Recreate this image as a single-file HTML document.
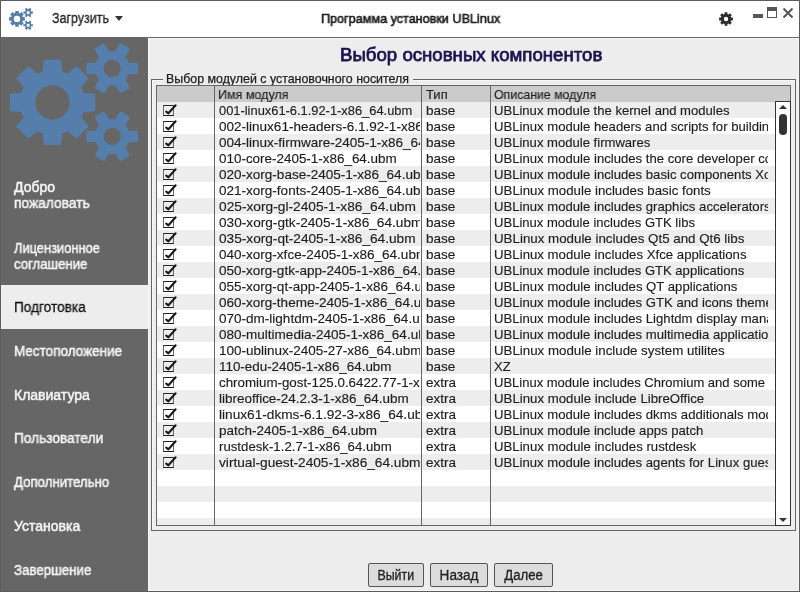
<!DOCTYPE html>
<html><head><meta charset="utf-8"><style>
html,body{margin:0;padding:0;}
body{width:800px;height:592px;position:relative;overflow:hidden;background:#5c5c5c;font-family:"Liberation Sans",sans-serif;-webkit-font-smoothing:antialiased;}
.abs{position:absolute;}
.t{position:absolute;white-space:nowrap;line-height:1;will-change:transform;}
.cell{position:absolute;white-space:nowrap;overflow:hidden;font-size:13px;line-height:17px;height:16px;color:#1e1e1e;will-change:transform;-webkit-text-stroke:0.15px #1e1e1e;}
.chk{position:absolute;width:9px;height:9px;border:1px solid #222;border-left-color:#666;border-right-color:#666;}
.btn{position:absolute;will-change:transform;border:1px solid #555;border-radius:2px;background:#dcdcdc;font-size:14px;line-height:22px;text-align:center;color:#222;}
#tb{position:absolute;left:1px;top:1px;width:798px;height:36px;background:#fff;}
#sb{position:absolute;left:1px;top:38px;width:147px;height:553px;background:#666;}
#ct{position:absolute;left:148px;top:38px;width:649px;height:551px;background:#ededed;border:1px solid #f9f9f9;}
</style></head><body>
<div id="tb"></div><div class="abs" style="left:1px;top:37px;width:798px;height:1px;background:#666"></div>
<div id="sb"></div><div id="ct"></div>
<svg class="abs" style="left:0;top:0" width="800" height="40"><path fill="#567eac" fill-rule="evenodd" d="M18.83,13.10L18.66,10.96L15.34,10.96L15.17,13.10A6.08,6.08 0 0 0 14.19,13.51L12.56,12.11L10.21,14.46L11.61,16.09A6.08,6.08 0 0 0 11.20,17.07L9.06,17.24L9.06,20.56L11.20,20.73A6.08,6.08 0 0 0 11.61,21.71L10.21,23.34L12.56,25.69L14.19,24.29A6.08,6.08 0 0 0 15.17,24.70L15.34,26.84L18.66,26.84L18.83,24.70A6.08,6.08 0 0 0 19.81,24.29L21.44,25.69L23.79,23.34L22.39,21.71A6.08,6.08 0 0 0 22.80,20.73L24.94,20.56L24.94,17.24L22.80,17.07A6.08,6.08 0 0 0 22.39,16.09L23.79,14.46L21.44,12.11L19.81,13.51A6.08,6.08 0 0 0 18.83,13.10ZM13.80,18.90a3.20,3.20 0 1 0 6.40,0a3.20,3.20 0 1 0 -6.40,0ZM31.22,13.65L32.95,13.61L32.95,11.47L31.22,11.43A3.25,3.25 0 0 0 30.66,10.45L31.48,8.94L29.63,7.87L28.73,9.34A3.25,3.25 0 0 0 27.60,9.34L26.70,7.87L24.85,8.94L25.67,10.45A3.25,3.25 0 0 0 25.11,11.43L23.38,11.47L23.38,13.61L25.11,13.65A3.25,3.25 0 0 0 25.67,14.63L24.85,16.15L26.70,17.22L27.60,15.75A3.25,3.25 0 0 0 28.73,15.75L29.63,17.22L31.48,16.15L30.66,14.63A3.25,3.25 0 0 0 31.22,13.65ZM26.56,12.54a1.61,1.61 0 1 0 3.22,0a1.61,1.61 0 1 0 -3.22,0ZM31.22,26.37L32.95,26.33L32.95,24.19L31.22,24.15A3.25,3.25 0 0 0 30.66,23.17L31.48,21.65L29.63,20.58L28.73,22.05A3.25,3.25 0 0 0 27.60,22.05L26.70,20.58L24.85,21.65L25.67,23.17A3.25,3.25 0 0 0 25.11,24.15L23.38,24.19L23.38,26.33L25.11,26.37A3.25,3.25 0 0 0 25.67,27.35L24.85,28.86L26.70,29.93L27.60,28.46A3.25,3.25 0 0 0 28.73,28.46L29.63,29.93L31.48,28.86L30.66,27.35A3.25,3.25 0 0 0 31.22,26.37ZM26.56,25.26a1.61,1.61 0 1 0 3.22,0a1.61,1.61 0 1 0 -3.22,0Z"/><path fill="#2b2b2b" fill-rule="evenodd" d="M727.39,13.99L727.40,12.14L724.60,12.14L724.61,13.99A5.20,5.20 0 0 0 723.44,14.47L722.14,13.16L720.16,15.14L721.47,16.44A5.20,5.20 0 0 0 720.99,17.61L719.14,17.60L719.14,20.40L720.99,20.39A5.20,5.20 0 0 0 721.47,21.56L720.16,22.86L722.14,24.84L723.44,23.53A5.20,5.20 0 0 0 724.61,24.01L724.60,25.86L727.40,25.86L727.39,24.01A5.20,5.20 0 0 0 728.56,23.53L729.86,24.84L731.84,22.86L730.53,21.56A5.20,5.20 0 0 0 731.01,20.39L732.86,20.40L732.86,17.60L731.01,17.61A5.20,5.20 0 0 0 730.53,16.44L731.84,15.14L729.86,13.16L728.56,14.47A5.20,5.20 0 0 0 727.39,13.99ZM723.80,19.00a2.20,2.20 0 1 0 4.40,0a2.20,2.20 0 1 0 -4.40,0Z"/></svg>
<div class="t" style="left:51.5px;top:11.15px;font-size:14px;color:#222;-webkit-text-stroke:0.3px #222;transform:scaleX(0.89);transform-origin:0 0;">Загрузить</div>
<div class="abs" style="left:115px;top:16px;width:0;height:0;border-left:4.5px solid transparent;border-right:4.5px solid transparent;border-top:5px solid #333"></div>
<div class="t" style="left:321px;top:12.00px;font-size:13px;color:#222;-webkit-text-stroke:0.6px #1a1a1a;transform:scaleX(0.97);transform-origin:0 0;">Программа установки UBLinux</div>
<div class="abs" style="left:753px;top:14px;width:10px;height:4px;background:#555"></div>
<div class="abs" style="left:767px;top:7px;width:8px;height:6px;border:1px solid #555;border-top-width:4px;"></div>
<svg class="abs" style="left:780px;top:5px" width="16" height="16"><path d="M3.5,3.5L12.5,12.5M12.5,3.5L3.5,12.5" stroke="#555" stroke-width="2"/></svg>
<svg class="abs" style="left:0;top:0" width="148" height="180"><path fill="#567eac" stroke="#567eac" stroke-width="2.5" stroke-linejoin="round" fill-rule="evenodd" d="M61.02,72.33L60.13,60.95L44.87,60.95L43.98,72.33A31.25,31.25 0 0 0 37.27,75.11L28.58,67.70L17.80,78.48L25.21,87.17A31.25,31.25 0 0 0 22.43,93.88L11.05,94.77L11.05,110.03L22.43,110.92A31.25,31.25 0 0 0 25.21,117.63L17.80,126.32L28.58,137.10L37.27,129.69A31.25,31.25 0 0 0 43.98,132.47L44.87,143.85L60.13,143.85L61.02,132.47A31.25,31.25 0 0 0 67.73,129.69L76.42,137.10L87.20,126.32L79.79,117.63A31.25,31.25 0 0 0 82.57,110.92L93.95,110.03L93.95,94.77L82.57,93.88A31.25,31.25 0 0 0 79.79,87.17L87.20,78.48L76.42,67.70L67.73,75.11A31.25,31.25 0 0 0 61.02,72.33ZM34.15,102.40a18.35,18.35 0 1 0 36.70,0a18.35,18.35 0 1 0 -36.70,0ZM127.65,73.10L136.75,72.87L136.75,63.93L127.65,63.70A16.15,16.15 0 0 0 124.00,57.37L128.34,49.37L120.61,44.91L115.85,52.67A16.15,16.15 0 0 0 108.55,52.67L103.79,44.91L96.06,49.37L100.40,57.37A16.15,16.15 0 0 0 96.75,63.70L87.65,63.93L87.65,72.87L96.75,73.10A16.15,16.15 0 0 0 100.40,79.43L96.06,87.43L103.79,91.89L108.55,84.13A16.15,16.15 0 0 0 115.85,84.13L120.61,91.89L128.34,87.43L124.00,79.43A16.15,16.15 0 0 0 127.65,73.10ZM102.35,68.40a9.85,9.85 0 1 0 19.70,0a9.85,9.85 0 1 0 -19.70,0ZM127.65,141.10L136.75,140.87L136.75,131.93L127.65,131.70A16.15,16.15 0 0 0 124.00,125.37L128.34,117.37L120.61,112.91L115.85,120.67A16.15,16.15 0 0 0 108.55,120.67L103.79,112.91L96.06,117.37L100.40,125.37A16.15,16.15 0 0 0 96.75,131.70L87.65,131.93L87.65,140.87L96.75,141.10A16.15,16.15 0 0 0 100.40,147.43L96.06,155.43L103.79,159.89L108.55,152.13A16.15,16.15 0 0 0 115.85,152.13L120.61,159.89L128.34,155.43L124.00,147.43A16.15,16.15 0 0 0 127.65,141.10ZM102.35,136.40a9.85,9.85 0 1 0 19.70,0a9.85,9.85 0 1 0 -19.70,0Z"/></svg>
<div class="abs" style="left:1px;top:285px;width:147px;height:44px;background:#ededed"></div>
<div class="t" style="left:14px;top:180.15px;font-size:14px;color:#f4f4f4;-webkit-text-stroke:0.5px #f4f4f4;transform:scaleX(1.0);transform-origin:0 0;">Добро</div>
<div class="t" style="left:14px;top:196.15px;font-size:14px;color:#f4f4f4;-webkit-text-stroke:0.5px #f4f4f4;transform:scaleX(0.983);transform-origin:0 0;">пожаловать</div>
<div class="t" style="left:14px;top:241.15px;font-size:14px;color:#f4f4f4;-webkit-text-stroke:0.5px #f4f4f4;transform:scaleX(0.918);transform-origin:0 0;">Лицензионное</div>
<div class="t" style="left:14px;top:256.65px;font-size:14px;color:#f4f4f4;-webkit-text-stroke:0.5px #f4f4f4;transform:scaleX(0.939);transform-origin:0 0;">соглашение</div>
<div class="t" style="left:14px;top:300.15px;font-size:14px;color:#111;-webkit-text-stroke:0.3px #111;transform:scaleX(0.973);transform-origin:0 0;">Подготовка</div>
<div class="t" style="left:14px;top:344.15px;font-size:14px;color:#f4f4f4;-webkit-text-stroke:0.5px #f4f4f4;transform:scaleX(0.964);transform-origin:0 0;">Местоположение</div>
<div class="t" style="left:14px;top:388.15px;font-size:14px;color:#f4f4f4;-webkit-text-stroke:0.5px #f4f4f4;transform:scaleX(1.0);transform-origin:0 0;">Клавиатура</div>
<div class="t" style="left:14px;top:431.15px;font-size:14px;color:#f4f4f4;-webkit-text-stroke:0.5px #f4f4f4;transform:scaleX(0.977);transform-origin:0 0;">Пользователи</div>
<div class="t" style="left:14px;top:475.35px;font-size:14px;color:#f4f4f4;-webkit-text-stroke:0.5px #f4f4f4;transform:scaleX(0.944);transform-origin:0 0;">Дополнительно</div>
<div class="t" style="left:14px;top:518.95px;font-size:14px;color:#f4f4f4;-webkit-text-stroke:0.5px #f4f4f4;transform:scaleX(1.0);transform-origin:0 0;">Установка</div>
<div class="t" style="left:14px;top:562.75px;font-size:14px;color:#f4f4f4;-webkit-text-stroke:0.5px #f4f4f4;transform:scaleX(0.95);transform-origin:0 0;">Завершение</div>
<div class="t" style="left:339.5px;top:46.06px;font-size:18px;color:#1c1450;-webkit-text-stroke:0.75px #1c1450;transform:scaleX(1.035);transform-origin:0 0;">Выбор основных компонентов</div>
<div class="abs" style="left:151px;top:79px;width:643px;height:450px;border:1px solid #666;box-shadow:inset 1px 1px 0 #f7f7f7"></div>
<div class="abs" style="left:163px;top:72px;width:250px;height:12px;background:#ededed"></div>
<div class="t" style="left:166px;top:72.80px;font-size:12.4px;color:#1e1e1e;-webkit-text-stroke:0.25px #1e1e1e;">Выбор модулей с установочного носителя</div>
<div class="abs" style="left:156px;top:85px;width:633px;height:439px;border:1px solid #666;background:#fff;overflow:hidden">
<div class="abs" style="left:0;top:0;width:640px;height:16px;background:#cbcbcb"></div>
<div class="cell" style="left:61px;top:0;transform:scaleX(0.963);transform-origin:0 0;">Имя модуля</div>
<div class="cell" style="left:268.5px;top:0;transform:scaleX(1.0);transform-origin:0 0;">Тип</div>
<div class="cell" style="left:336.5px;top:0;transform:scaleX(0.948);transform-origin:0 0;">Описание модуля</div>
<div class="abs" style="left:0;top:16px;width:640px;height:16px;background:#ededed"></div>
<div class="chk" style="left:6px;top:19px"></div>
<svg class="abs" style="left:6px;top:16px" width="16" height="16"><path d="M3.2,9.6L5.4,11.3L12.6,3.3" stroke="#1a1a1a" stroke-width="2.1" stroke-linecap="round" stroke-linejoin="round" fill="none"/></svg>
<div class="cell" style="left:62px;top:16px;width:201px"><span style="display:inline-block;transform:scaleX(0.99);transform-origin:0 0">001-linux61-6.1.92-1-x86_64.ubm</span></div>
<div class="cell" style="left:268.5px;top:16px;width:64px"><span style="display:inline-block;transform:scaleX(1.04);transform-origin:0 0">base</span></div>
<div class="cell" style="left:336.5px;top:16px;width:273.5px"><span style="display:inline-block;transform:scaleX(1.006);transform-origin:0 0">UBLinux module the kernel and modules</span></div>
<div class="abs" style="left:0;top:32px;width:640px;height:16px;background:#ffffff"></div>
<div class="chk" style="left:6px;top:35px"></div>
<svg class="abs" style="left:6px;top:32px" width="16" height="16"><path d="M3.2,9.6L5.4,11.3L12.6,3.3" stroke="#1a1a1a" stroke-width="2.1" stroke-linecap="round" stroke-linejoin="round" fill="none"/></svg>
<div class="cell" style="left:62px;top:32px;width:201px"><span style="display:inline-block;transform:scaleX(1.04);transform-origin:0 0">002-linux61-headers-6.1.92-1-x86_64.ubm</span></div>
<div class="cell" style="left:268.5px;top:32px;width:64px"><span style="display:inline-block;transform:scaleX(1.04);transform-origin:0 0">base</span></div>
<div class="cell" style="left:336.5px;top:32px;width:273.5px"><span style="display:inline-block;transform:scaleX(1.01);transform-origin:0 0">UBLinux module headers and scripts for building modules</span></div>
<div class="abs" style="left:0;top:48px;width:640px;height:16px;background:#ededed"></div>
<div class="chk" style="left:6px;top:51px"></div>
<svg class="abs" style="left:6px;top:48px" width="16" height="16"><path d="M3.2,9.6L5.4,11.3L12.6,3.3" stroke="#1a1a1a" stroke-width="2.1" stroke-linecap="round" stroke-linejoin="round" fill="none"/></svg>
<div class="cell" style="left:62px;top:48px;width:201px"><span style="display:inline-block;transform:scaleX(1.04);transform-origin:0 0">004-linux-firmware-2405-1-x86_64.ubm</span></div>
<div class="cell" style="left:268.5px;top:48px;width:64px"><span style="display:inline-block;transform:scaleX(1.04);transform-origin:0 0">base</span></div>
<div class="cell" style="left:336.5px;top:48px;width:273.5px"><span style="display:inline-block;transform:scaleX(1.006);transform-origin:0 0">UBLinux module firmwares</span></div>
<div class="abs" style="left:0;top:64px;width:640px;height:16px;background:#ffffff"></div>
<div class="chk" style="left:6px;top:67px"></div>
<svg class="abs" style="left:6px;top:64px" width="16" height="16"><path d="M3.2,9.6L5.4,11.3L12.6,3.3" stroke="#1a1a1a" stroke-width="2.1" stroke-linecap="round" stroke-linejoin="round" fill="none"/></svg>
<div class="cell" style="left:62px;top:64px;width:201px"><span style="display:inline-block;transform:scaleX(1.033);transform-origin:0 0">010-core-2405-1-x86_64.ubm</span></div>
<div class="cell" style="left:268.5px;top:64px;width:64px"><span style="display:inline-block;transform:scaleX(1.04);transform-origin:0 0">base</span></div>
<div class="cell" style="left:336.5px;top:64px;width:273.5px"><span style="display:inline-block;transform:scaleX(1.01);transform-origin:0 0">UBLinux module includes the core developer components</span></div>
<div class="abs" style="left:0;top:80px;width:640px;height:16px;background:#ededed"></div>
<div class="chk" style="left:6px;top:83px"></div>
<svg class="abs" style="left:6px;top:80px" width="16" height="16"><path d="M3.2,9.6L5.4,11.3L12.6,3.3" stroke="#1a1a1a" stroke-width="2.1" stroke-linecap="round" stroke-linejoin="round" fill="none"/></svg>
<div class="cell" style="left:62px;top:80px;width:201px"><span style="display:inline-block;transform:scaleX(1.04);transform-origin:0 0">020-xorg-base-2405-1-x86_64.ubm</span></div>
<div class="cell" style="left:268.5px;top:80px;width:64px"><span style="display:inline-block;transform:scaleX(1.04);transform-origin:0 0">base</span></div>
<div class="cell" style="left:336.5px;top:80px;width:273.5px"><span style="display:inline-block;transform:scaleX(1.01);transform-origin:0 0">UBLinux module includes basic components Xorg</span></div>
<div class="abs" style="left:0;top:96px;width:640px;height:16px;background:#ffffff"></div>
<div class="chk" style="left:6px;top:99px"></div>
<svg class="abs" style="left:6px;top:96px" width="16" height="16"><path d="M3.2,9.6L5.4,11.3L12.6,3.3" stroke="#1a1a1a" stroke-width="2.1" stroke-linecap="round" stroke-linejoin="round" fill="none"/></svg>
<div class="cell" style="left:62px;top:96px;width:201px"><span style="display:inline-block;transform:scaleX(1.04);transform-origin:0 0">021-xorg-fonts-2405-1-x86_64.ubm</span></div>
<div class="cell" style="left:268.5px;top:96px;width:64px"><span style="display:inline-block;transform:scaleX(1.04);transform-origin:0 0">base</span></div>
<div class="cell" style="left:336.5px;top:96px;width:273.5px"><span style="display:inline-block;transform:scaleX(1.02);transform-origin:0 0">UBLinux module includes basic fonts</span></div>
<div class="abs" style="left:0;top:112px;width:640px;height:16px;background:#ededed"></div>
<div class="chk" style="left:6px;top:115px"></div>
<svg class="abs" style="left:6px;top:112px" width="16" height="16"><path d="M3.2,9.6L5.4,11.3L12.6,3.3" stroke="#1a1a1a" stroke-width="2.1" stroke-linecap="round" stroke-linejoin="round" fill="none"/></svg>
<div class="cell" style="left:62px;top:112px;width:201px"><span style="display:inline-block;transform:scaleX(1.056);transform-origin:0 0">025-xorg-gl-2405-1-x86_64.ubm</span></div>
<div class="cell" style="left:268.5px;top:112px;width:64px"><span style="display:inline-block;transform:scaleX(1.04);transform-origin:0 0">base</span></div>
<div class="cell" style="left:336.5px;top:112px;width:273.5px"><span style="display:inline-block;transform:scaleX(1.01);transform-origin:0 0">UBLinux module includes graphics accelerators</span></div>
<div class="abs" style="left:0;top:128px;width:640px;height:16px;background:#ffffff"></div>
<div class="chk" style="left:6px;top:131px"></div>
<svg class="abs" style="left:6px;top:128px" width="16" height="16"><path d="M3.2,9.6L5.4,11.3L12.6,3.3" stroke="#1a1a1a" stroke-width="2.1" stroke-linecap="round" stroke-linejoin="round" fill="none"/></svg>
<div class="cell" style="left:62px;top:128px;width:201px"><span style="display:inline-block;transform:scaleX(1.05);transform-origin:0 0">030-xorg-gtk-2405-1-x86_64.ubm</span></div>
<div class="cell" style="left:268.5px;top:128px;width:64px"><span style="display:inline-block;transform:scaleX(1.04);transform-origin:0 0">base</span></div>
<div class="cell" style="left:336.5px;top:128px;width:273.5px"><span style="display:inline-block;transform:scaleX(1.004);transform-origin:0 0">UBLinux module includes GTK libs</span></div>
<div class="abs" style="left:0;top:144px;width:640px;height:16px;background:#ededed"></div>
<div class="chk" style="left:6px;top:147px"></div>
<svg class="abs" style="left:6px;top:144px" width="16" height="16"><path d="M3.2,9.6L5.4,11.3L12.6,3.3" stroke="#1a1a1a" stroke-width="2.1" stroke-linecap="round" stroke-linejoin="round" fill="none"/></svg>
<div class="cell" style="left:62px;top:144px;width:201px"><span style="display:inline-block;transform:scaleX(1.05);transform-origin:0 0">035-xorg-qt-2405-1-x86_64.ubm</span></div>
<div class="cell" style="left:268.5px;top:144px;width:64px"><span style="display:inline-block;transform:scaleX(1.04);transform-origin:0 0">base</span></div>
<div class="cell" style="left:336.5px;top:144px;width:273.5px"><span style="display:inline-block;transform:scaleX(1.025);transform-origin:0 0">UBLinux module includes Qt5 and Qt6 libs</span></div>
<div class="abs" style="left:0;top:160px;width:640px;height:16px;background:#ffffff"></div>
<div class="chk" style="left:6px;top:163px"></div>
<svg class="abs" style="left:6px;top:160px" width="16" height="16"><path d="M3.2,9.6L5.4,11.3L12.6,3.3" stroke="#1a1a1a" stroke-width="2.1" stroke-linecap="round" stroke-linejoin="round" fill="none"/></svg>
<div class="cell" style="left:62px;top:160px;width:201px"><span style="display:inline-block;transform:scaleX(1.04);transform-origin:0 0">040-xorg-xfce-2405-1-x86_64.ubm</span></div>
<div class="cell" style="left:268.5px;top:160px;width:64px"><span style="display:inline-block;transform:scaleX(1.04);transform-origin:0 0">base</span></div>
<div class="cell" style="left:336.5px;top:160px;width:273.5px"><span style="display:inline-block;transform:scaleX(1.016);transform-origin:0 0">UBLinux module includes Xfce applications</span></div>
<div class="abs" style="left:0;top:176px;width:640px;height:16px;background:#ededed"></div>
<div class="chk" style="left:6px;top:179px"></div>
<svg class="abs" style="left:6px;top:176px" width="16" height="16"><path d="M3.2,9.6L5.4,11.3L12.6,3.3" stroke="#1a1a1a" stroke-width="2.1" stroke-linecap="round" stroke-linejoin="round" fill="none"/></svg>
<div class="cell" style="left:62px;top:176px;width:201px"><span style="display:inline-block;transform:scaleX(1.04);transform-origin:0 0">050-xorg-gtk-app-2405-1-x86_64.ubm</span></div>
<div class="cell" style="left:268.5px;top:176px;width:64px"><span style="display:inline-block;transform:scaleX(1.04);transform-origin:0 0">base</span></div>
<div class="cell" style="left:336.5px;top:176px;width:273.5px"><span style="display:inline-block;transform:scaleX(1.004);transform-origin:0 0">UBLinux module includes GTK applications</span></div>
<div class="abs" style="left:0;top:192px;width:640px;height:16px;background:#ffffff"></div>
<div class="chk" style="left:6px;top:195px"></div>
<svg class="abs" style="left:6px;top:192px" width="16" height="16"><path d="M3.2,9.6L5.4,11.3L12.6,3.3" stroke="#1a1a1a" stroke-width="2.1" stroke-linecap="round" stroke-linejoin="round" fill="none"/></svg>
<div class="cell" style="left:62px;top:192px;width:201px"><span style="display:inline-block;transform:scaleX(1.04);transform-origin:0 0">055-xorg-qt-app-2405-1-x86_64.ubm</span></div>
<div class="cell" style="left:268.5px;top:192px;width:64px"><span style="display:inline-block;transform:scaleX(1.04);transform-origin:0 0">base</span></div>
<div class="cell" style="left:336.5px;top:192px;width:273.5px"><span style="display:inline-block;transform:scaleX(1.012);transform-origin:0 0">UBLinux module includes QT applications</span></div>
<div class="abs" style="left:0;top:208px;width:640px;height:16px;background:#ededed"></div>
<div class="chk" style="left:6px;top:211px"></div>
<svg class="abs" style="left:6px;top:208px" width="16" height="16"><path d="M3.2,9.6L5.4,11.3L12.6,3.3" stroke="#1a1a1a" stroke-width="2.1" stroke-linecap="round" stroke-linejoin="round" fill="none"/></svg>
<div class="cell" style="left:62px;top:208px;width:201px"><span style="display:inline-block;transform:scaleX(1.04);transform-origin:0 0">060-xorg-theme-2405-1-x86_64.ubm</span></div>
<div class="cell" style="left:268.5px;top:208px;width:64px"><span style="display:inline-block;transform:scaleX(1.04);transform-origin:0 0">base</span></div>
<div class="cell" style="left:336.5px;top:208px;width:273.5px"><span style="display:inline-block;transform:scaleX(1.01);transform-origin:0 0">UBLinux module includes GTK and icons themes</span></div>
<div class="abs" style="left:0;top:224px;width:640px;height:16px;background:#ffffff"></div>
<div class="chk" style="left:6px;top:227px"></div>
<svg class="abs" style="left:6px;top:224px" width="16" height="16"><path d="M3.2,9.6L5.4,11.3L12.6,3.3" stroke="#1a1a1a" stroke-width="2.1" stroke-linecap="round" stroke-linejoin="round" fill="none"/></svg>
<div class="cell" style="left:62px;top:224px;width:201px"><span style="display:inline-block;transform:scaleX(1.04);transform-origin:0 0">070-dm-lightdm-2405-1-x86_64.ubm</span></div>
<div class="cell" style="left:268.5px;top:224px;width:64px"><span style="display:inline-block;transform:scaleX(1.04);transform-origin:0 0">base</span></div>
<div class="cell" style="left:336.5px;top:224px;width:273.5px"><span style="display:inline-block;transform:scaleX(1.01);transform-origin:0 0">UBLinux module includes Lightdm display manager</span></div>
<div class="abs" style="left:0;top:240px;width:640px;height:16px;background:#ededed"></div>
<div class="chk" style="left:6px;top:243px"></div>
<svg class="abs" style="left:6px;top:240px" width="16" height="16"><path d="M3.2,9.6L5.4,11.3L12.6,3.3" stroke="#1a1a1a" stroke-width="2.1" stroke-linecap="round" stroke-linejoin="round" fill="none"/></svg>
<div class="cell" style="left:62px;top:240px;width:201px"><span style="display:inline-block;transform:scaleX(1.04);transform-origin:0 0">080-multimedia-2405-1-x86_64.ubm</span></div>
<div class="cell" style="left:268.5px;top:240px;width:64px"><span style="display:inline-block;transform:scaleX(1.04);transform-origin:0 0">base</span></div>
<div class="cell" style="left:336.5px;top:240px;width:273.5px"><span style="display:inline-block;transform:scaleX(1.01);transform-origin:0 0">UBLinux module includes multimedia applications</span></div>
<div class="abs" style="left:0;top:256px;width:640px;height:16px;background:#ffffff"></div>
<div class="chk" style="left:6px;top:259px"></div>
<svg class="abs" style="left:6px;top:256px" width="16" height="16"><path d="M3.2,9.6L5.4,11.3L12.6,3.3" stroke="#1a1a1a" stroke-width="2.1" stroke-linecap="round" stroke-linejoin="round" fill="none"/></svg>
<div class="cell" style="left:62px;top:256px;width:201px"><span style="display:inline-block;transform:scaleX(1.038);transform-origin:0 0">100-ublinux-2405-27-x86_64.ubm</span></div>
<div class="cell" style="left:268.5px;top:256px;width:64px"><span style="display:inline-block;transform:scaleX(1.04);transform-origin:0 0">base</span></div>
<div class="cell" style="left:336.5px;top:256px;width:273.5px"><span style="display:inline-block;transform:scaleX(1.023);transform-origin:0 0">UBLinux module include system utilites</span></div>
<div class="abs" style="left:0;top:272px;width:640px;height:16px;background:#ededed"></div>
<div class="chk" style="left:6px;top:275px"></div>
<svg class="abs" style="left:6px;top:272px" width="16" height="16"><path d="M3.2,9.6L5.4,11.3L12.6,3.3" stroke="#1a1a1a" stroke-width="2.1" stroke-linecap="round" stroke-linejoin="round" fill="none"/></svg>
<div class="cell" style="left:62px;top:272px;width:201px"><span style="display:inline-block;transform:scaleX(1.03);transform-origin:0 0">110-edu-2405-1-x86_64.ubm</span></div>
<div class="cell" style="left:268.5px;top:272px;width:64px"><span style="display:inline-block;transform:scaleX(1.04);transform-origin:0 0">base</span></div>
<div class="cell" style="left:336.5px;top:272px;width:273.5px"><span style="display:inline-block;transform:scaleX(1.0);transform-origin:0 0">XZ</span></div>
<div class="abs" style="left:0;top:288px;width:640px;height:16px;background:#ffffff"></div>
<div class="chk" style="left:6px;top:291px"></div>
<svg class="abs" style="left:6px;top:288px" width="16" height="16"><path d="M3.2,9.6L5.4,11.3L12.6,3.3" stroke="#1a1a1a" stroke-width="2.1" stroke-linecap="round" stroke-linejoin="round" fill="none"/></svg>
<div class="cell" style="left:62px;top:288px;width:201px"><span style="display:inline-block;transform:scaleX(1.025);transform-origin:0 0">chromium-gost-125.0.6422.77-1-x86_64.ubm</span></div>
<div class="cell" style="left:268.5px;top:288px;width:64px"><span style="display:inline-block;transform:scaleX(1.04);transform-origin:0 0">extra</span></div>
<div class="cell" style="left:336.5px;top:288px;width:273.5px"><span style="display:inline-block;transform:scaleX(1.0);transform-origin:0 0">UBLinux module includes Chromium and some</span></div>
<div class="abs" style="left:0;top:304px;width:640px;height:16px;background:#ededed"></div>
<div class="chk" style="left:6px;top:307px"></div>
<svg class="abs" style="left:6px;top:304px" width="16" height="16"><path d="M3.2,9.6L5.4,11.3L12.6,3.3" stroke="#1a1a1a" stroke-width="2.1" stroke-linecap="round" stroke-linejoin="round" fill="none"/></svg>
<div class="cell" style="left:62px;top:304px;width:201px"><span style="display:inline-block;transform:scaleX(1.035);transform-origin:0 0">libreoffice-24.2.3-1-x86_64.ubm</span></div>
<div class="cell" style="left:268.5px;top:304px;width:64px"><span style="display:inline-block;transform:scaleX(1.04);transform-origin:0 0">extra</span></div>
<div class="cell" style="left:336.5px;top:304px;width:273.5px"><span style="display:inline-block;transform:scaleX(1.018);transform-origin:0 0">UBLinux module include LibreOffice</span></div>
<div class="abs" style="left:0;top:320px;width:640px;height:16px;background:#ffffff"></div>
<div class="chk" style="left:6px;top:323px"></div>
<svg class="abs" style="left:6px;top:320px" width="16" height="16"><path d="M3.2,9.6L5.4,11.3L12.6,3.3" stroke="#1a1a1a" stroke-width="2.1" stroke-linecap="round" stroke-linejoin="round" fill="none"/></svg>
<div class="cell" style="left:62px;top:320px;width:201px"><span style="display:inline-block;transform:scaleX(1.05);transform-origin:0 0">linux61-dkms-6.1.92-3-x86_64.ubm</span></div>
<div class="cell" style="left:268.5px;top:320px;width:64px"><span style="display:inline-block;transform:scaleX(1.04);transform-origin:0 0">extra</span></div>
<div class="cell" style="left:336.5px;top:320px;width:273.5px"><span style="display:inline-block;transform:scaleX(1.01);transform-origin:0 0">UBLinux module includes dkms additionals modules</span></div>
<div class="abs" style="left:0;top:336px;width:640px;height:16px;background:#ededed"></div>
<div class="chk" style="left:6px;top:339px"></div>
<svg class="abs" style="left:6px;top:336px" width="16" height="16"><path d="M3.2,9.6L5.4,11.3L12.6,3.3" stroke="#1a1a1a" stroke-width="2.1" stroke-linecap="round" stroke-linejoin="round" fill="none"/></svg>
<div class="cell" style="left:62px;top:336px;width:201px"><span style="display:inline-block;transform:scaleX(1.036);transform-origin:0 0">patch-2405-1-x86_64.ubm</span></div>
<div class="cell" style="left:268.5px;top:336px;width:64px"><span style="display:inline-block;transform:scaleX(1.04);transform-origin:0 0">extra</span></div>
<div class="cell" style="left:336.5px;top:336px;width:273.5px"><span style="display:inline-block;transform:scaleX(1.009);transform-origin:0 0">UBLinux module include apps patch</span></div>
<div class="abs" style="left:0;top:352px;width:640px;height:16px;background:#ffffff"></div>
<div class="chk" style="left:6px;top:355px"></div>
<svg class="abs" style="left:6px;top:352px" width="16" height="16"><path d="M3.2,9.6L5.4,11.3L12.6,3.3" stroke="#1a1a1a" stroke-width="2.1" stroke-linecap="round" stroke-linejoin="round" fill="none"/></svg>
<div class="cell" style="left:62px;top:352px;width:201px"><span style="display:inline-block;transform:scaleX(1.017);transform-origin:0 0">rustdesk-1.2.7-1-x86_64.ubm</span></div>
<div class="cell" style="left:268.5px;top:352px;width:64px"><span style="display:inline-block;transform:scaleX(1.04);transform-origin:0 0">extra</span></div>
<div class="cell" style="left:336.5px;top:352px;width:273.5px"><span style="display:inline-block;transform:scaleX(1.014);transform-origin:0 0">UBLinux module includes rustdesk</span></div>
<div class="abs" style="left:0;top:368px;width:640px;height:16px;background:#ededed"></div>
<div class="chk" style="left:6px;top:371px"></div>
<svg class="abs" style="left:6px;top:368px" width="16" height="16"><path d="M3.2,9.6L5.4,11.3L12.6,3.3" stroke="#1a1a1a" stroke-width="2.1" stroke-linecap="round" stroke-linejoin="round" fill="none"/></svg>
<div class="cell" style="left:62px;top:368px;width:201px"><span style="display:inline-block;transform:scaleX(1.052);transform-origin:0 0">virtual-guest-2405-1-x86_64.ubm</span></div>
<div class="cell" style="left:268.5px;top:368px;width:64px"><span style="display:inline-block;transform:scaleX(1.04);transform-origin:0 0">extra</span></div>
<div class="cell" style="left:336.5px;top:368px;width:273.5px"><span style="display:inline-block;transform:scaleX(1.01);transform-origin:0 0">UBLinux module includes agents for Linux guests</span></div>
<div class="abs" style="left:0;top:384px;width:640px;height:16px;background:#ffffff"></div>
<div class="abs" style="left:0;top:400px;width:640px;height:16px;background:#ededed"></div>
<div class="abs" style="left:0;top:416px;width:640px;height:16px;background:#ffffff"></div>
<div class="abs" style="left:0;top:432px;width:640px;height:16px;background:#ededed"></div>
<div class="abs" style="left:57px;top:0;width:1px;height:460px;background:#666"></div>
<div class="abs" style="left:264px;top:0;width:1px;height:460px;background:#666"></div>
<div class="abs" style="left:333px;top:0;width:1px;height:460px;background:#666"></div>
<div class="abs" style="left:618px;top:15px;width:14px;height:424px;border-left:1px solid #333;border-top:1px solid #333;background:#fff"></div>
<div class="abs" style="left:622px;top:19px;width:0;height:0;border-left:4px solid transparent;border-right:4px solid transparent;border-bottom:4px solid #333"></div>
<div class="abs" style="left:622px;top:28px;width:8px;height:21px;border-radius:4px;background:#333"></div>
<div class="abs" style="left:622px;top:432px;width:0;height:0;border-left:4px solid transparent;border-right:4px solid transparent;border-top:4px solid #333"></div>
</div>
<div class="abs" style="left:790px;top:101px;width:1px;height:425px;background:#333"></div>
<div class="abs" style="left:775px;top:525px;width:16px;height:1px;background:#333"></div>
<div class="btn" style="left:368px;top:563px;width:54px;height:22px"><span style="display:inline-block;transform:scaleX(0.885);-webkit-text-stroke:0.3px #222">Выйти</span></div>
<div class="btn" style="left:430px;top:563px;width:56px;height:22px"><span style="display:inline-block;transform:scaleX(0.97);-webkit-text-stroke:0.3px #222">Назад</span></div>
<div class="btn" style="left:494px;top:563px;width:57px;height:22px"><span style="display:inline-block;transform:scaleX(0.94);-webkit-text-stroke:0.3px #222">Далее</span></div>
</body></html>
